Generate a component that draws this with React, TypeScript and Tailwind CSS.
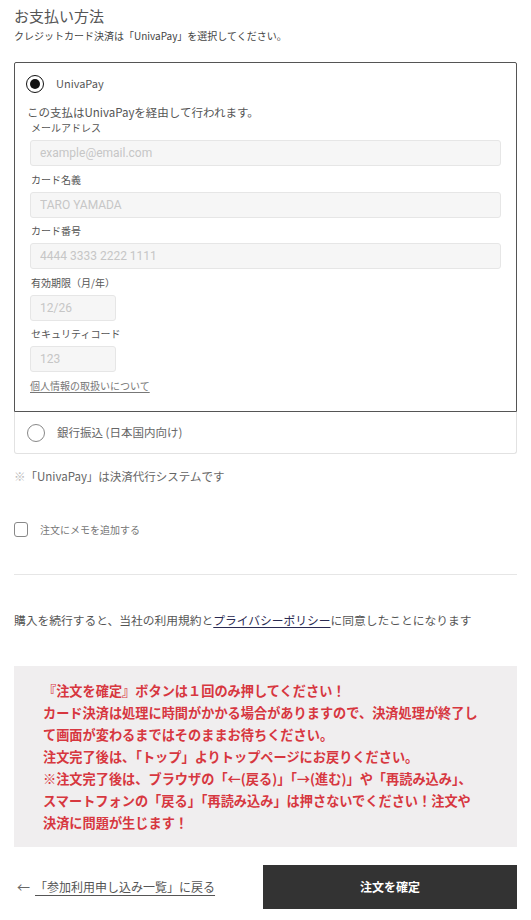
import { useState } from "react";

const jp = "font-['Noto_Sans_CJK_JP','Noto_Sans',sans-serif]";

const fields = [
    { label: "メールアドレス", placeholder: "example@email.com", short: false },
    { label: "カード名義", placeholder: "TARO YAMADA", short: false },
    { label: "カード番号", placeholder: "4444 3333 2222 1111", short: false },
    { label: "有効期限（月/年）", placeholder: "12/26", short: true },
    { label: "セキュリティコード", placeholder: "123", short: true },
];

const Radio = ({ checked }: { checked: boolean }) =>
    checked ? (
        <span className="flex h-[18px] w-[18px] items-center justify-center rounded-full border-[1.5px] border-[#111]">
            <span className="h-[10px] w-[10px] rounded-full bg-[#111]" />
        </span>
    ) : (
        <span className="h-[18px] w-[18px] rounded-full border border-[#888]" />
    );

export default function App() {
    const [method, setMethod] = useState("univa");
    const [memo, setMemo] = useState(false);

    return (
        <div className={`${jp} w-[531px] bg-white px-[14px] pt-[6px] pb-[11px]`}>
            <h2 className="text-[15px] leading-[20px] text-[#555]">お支払い方法</h2>
            <p className="mt-[3px] text-[10px] leading-[14px] text-[#444]">
                クレジットカード決済は「UnivaPay」を選択してください。
            </p>

            {/* payment methods */}
            <div className="mt-[19px]">
                <div className="rounded-t-[2px] border border-[#555] pr-[15px] pb-[18px]">
                    <button
                        onClick={() => setMethod("univa")}
                        className="flex h-[41px] items-center gap-[12px] pl-[11px] text-[11px] text-[#555]"
                    >
                        <Radio checked={method === "univa"} />
                        UnivaPay
                    </button>
                    <p className="pl-[12px] text-[11.5px] leading-[16px] text-[#555]">
                        この支払はUnivaPayを経由して行われます。
                    </p>
                    <div className="pl-[15px]">
                        {fields.map((f, i) => (
                            <div key={f.label} className={i === 0 ? "" : "mt-[5.5px]"}>
                                <div className="pl-[1px] text-[10px] leading-[16px] text-[#555]">{f.label}</div>
                                <input
                                    placeholder={f.placeholder}
                                    className={`mt-[4px] h-[26px] rounded-[3px] border border-[#e6e6e6] bg-[#f6f6f6] px-[9px] font-['Roboto',sans-serif] text-[12px] text-[#333] outline-none placeholder:text-[#c6c6c6] ${
                                        f.short ? "w-[86px]" : "w-full"
                                    }`}
                                />
                            </div>
                        ))}
                        <a href="#" className="mt-[6px] block text-[10px] leading-[15px] text-[#777] underline underline-offset-2">
                            個人情報の取扱いについて
                        </a>
                    </div>
                </div>
                <button
                    onClick={() => setMethod("bank")}
                    className="flex h-[42px] w-full items-center gap-[12px] rounded-b-[3px] border-x border-b border-[#e2e2e2] pl-[12px] text-[11.5px] text-[#666]"
                >
                    <Radio checked={method === "bank"} />
                    銀行振込 (日本国内向け)
                </button>
            </div>

            <p className="mt-[13px] text-[11.5px] leading-[18px] text-[#666]">
                <span className="text-[#bbb]">※</span>「UnivaPay」は決済代行システムです
            </p>

            {/* memo */}
            <label className="mt-[37px] flex cursor-pointer items-center gap-[12px]">
                <input type="checkbox" checked={memo} onChange={(e) => setMemo(e.target.checked)} className="sr-only" />
                <span className="h-[15px] w-[14px] rounded-[3px] border border-[#888] bg-white" />
                <span className="text-[10px] leading-[14px] text-[#777]">注文にメモを追加する</span>
            </label>

            <div className="mt-[37px] h-px bg-[#e6e6e6]" />

            <p className="mt-[36px] text-[11.75px] leading-[18px] text-[#555]">
                購入を続行すると、当社の利用規約と
                <a href="#" className="text-[#2a2a52] underline underline-offset-2">プライバシーポリシー</a>
                に同意したことになります
            </p>

            {/* notice */}
            <div className="mt-[37px] bg-[#f0eeef] pt-[14px] pb-[13px] pr-[28px] pl-[29px] text-[13.2px] font-bold leading-[22px] text-[#d7373f]">
                <p>『注文を確定』ボタンは１回のみ押してください！</p>
                <p>カード決済は処理に時間がかかる場合がありますので、決済処理が終了して画面が変わるまではそのままお待ちください。</p>
                <p>注文完了後は、「トップ」よりトップページにお戻りください。</p>
                <p>
                    ※注文完了後は、ブラウザの「←(戻る)」「→(進む)」や「再読み込み」、
                    <br />
                    スマートフォンの「戻る」「再読み込み」は押さないでください！注文や
                    <br />
                    決済に問題が生じます！
                </p>
            </div>

            {/* actions */}
            <div className="mt-[18px] flex items-center justify-between">
                <a href="#" className="flex items-center gap-[5px] pl-[3px] text-[12px] text-[#555]">
                    <span className="text-[13px] text-[#666]">←</span>
                    <span className="underline underline-offset-[3px]">「参加利用申し込み一覧」に戻る</span>
                </a>
                <button className="h-[44px] w-[254px] bg-[#333] text-[12px] font-bold text-white">注文を確定</button>
            </div>
        </div>
    );
}
